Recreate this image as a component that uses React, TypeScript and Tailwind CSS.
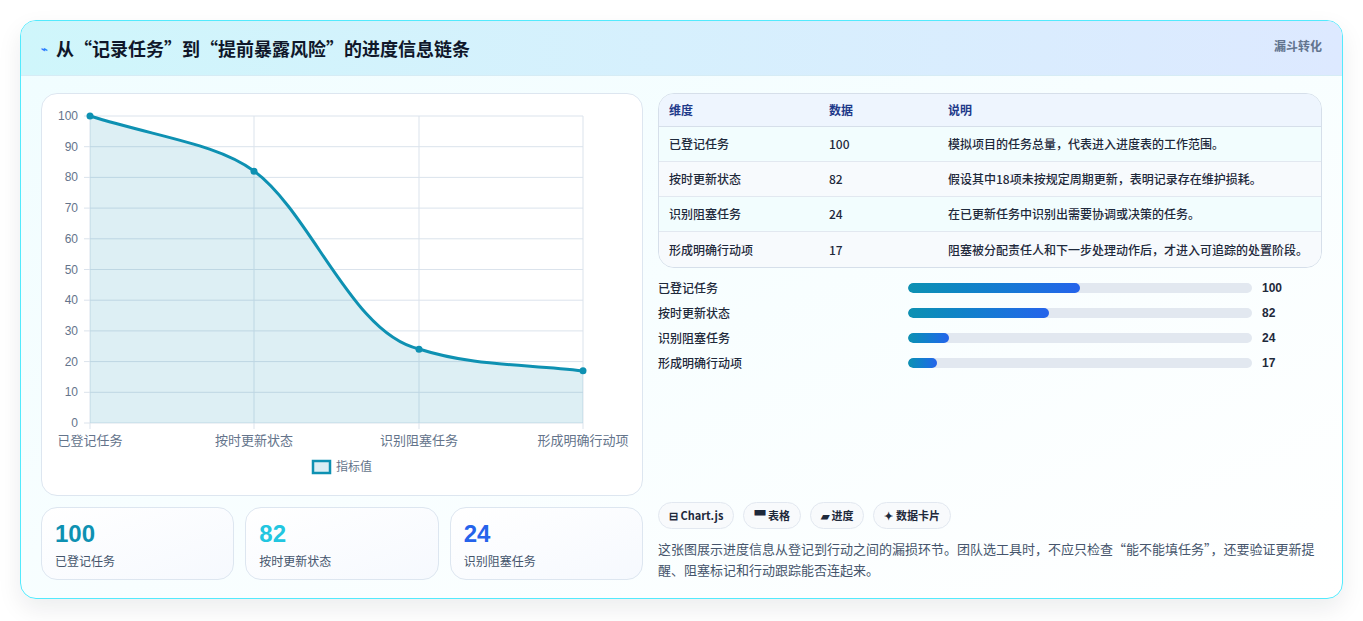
const font = { fontFamily: '"Noto Sans CJK SC", "Liberation Sans", sans-serif' };

const rows = [
  { name: "已登记任务", value: 100, note: "模拟项目的任务总量，代表进入进度表的工作范围。" },
  { name: "按时更新状态", value: 82, note: "假设其中18项未按规定周期更新，表明记录存在维护损耗。" },
  { name: "识别阻塞任务", value: 24, note: "在已更新任务中识别出需要协调或决策的任务。" },
  { name: "形成明确行动项", value: 17, note: "阻塞被分配责任人和下一步处理动作后，才进入可追踪的处置阶段。" },
];

const Chart = () => {
  const xs = [48, 212, 377, 541];
  const yOf = (v: number) => 329 - v * 3.07;
  const pts = rows.map((r, i) => [xs[i], yOf(r.value)]);
  const line = `M48,22 C120,44 175,50 212,77 C270,120 310,240 377,255 C430,272 480,270 541,277`;
  return (
    <svg width="600" height="401" viewBox="0 0 600 401" className="block">
      {[0, 10, 20, 30, 40, 50, 60, 70, 80, 90, 100].map((v) => (
        <g key={v}>
          <line x1={42} x2={541} y1={yOf(v)} y2={yOf(v)} stroke="#dbe3ec" strokeWidth={1} />
          <text x={36} y={yOf(v) + 4} textAnchor="end" fontSize="12" fill="#64748b" fontFamily="Liberation Sans, sans-serif">{v}</text>
        </g>
      ))}
      {xs.map((x) => (
        <line key={x} x1={x} x2={x} y1={22} y2={335} stroke="#dbe3ec" strokeWidth={1} />
      ))}
      <path d={`${line} L541,329 L48,329 Z`} fill="#0e91b2" fillOpacity={0.14} />
      <path d={line} fill="none" stroke="#0e91b2" strokeWidth={3} />
      {pts.map(([x, y], i) => (
        <circle key={i} cx={x} cy={y} r={3.5} fill="#0e91b2" />
      ))}
      {rows.map((r, i) => (
        <text key={r.name} x={xs[i]} y={351} textAnchor="middle" fontSize="13" fill="#64748b" style={font}>{r.name}</text>
      ))}
      <rect x={271} y={367} width={17} height={12} fill="#dbeef4" stroke="#0e91b2" strokeWidth={2.5} />
      <text x={294} y={377} fontSize="12" fill="#64748b" style={font}>指标值</text>
    </svg>
  );
};

export default function App() {
  return (
    <div className="min-h-screen bg-white p-5 pb-[22px]" style={font}>
      <div className="rounded-2xl border border-cyan-300 overflow-hidden shadow-[0_10px_25px_rgba(15,23,42,0.08)] bg-gradient-to-br from-[#f0fdff] to-white">
        <div className="h-[55px] flex items-center justify-between px-5 bg-gradient-to-r from-[#cff6fb] to-[#dde9ff] border-b border-[#d6ecf5]">
          <h1 className="text-[18px] font-bold text-[#0f172a] flex items-center gap-2">
            <span className="text-[11px] text-blue-500">⌁</span>从“记录任务”到“提前暴露风险”的进度信息链条
          </h1>
          <span className="self-start mt-4 text-[12px] font-semibold text-slate-500">漏斗转化</span>
        </div>
        <div className="flex gap-[15px] px-5 pt-[17px] pb-[18px]">
          <div className="w-[602px] flex flex-col gap-[11px]">
            <div className="h-[403px] rounded-2xl border border-[#dde6f0] bg-white">
              <Chart />
            </div>
            <div className="grid grid-cols-3 gap-[11px]">
              {[
                ["100", "已登记任务", "text-[#0e91b2]"],
                ["82", "按时更新状态", "text-[#22c6e0]"],
                ["24", "识别阻塞任务", "text-[#2563eb]"],
              ].map(([v, l, c]) => (
                <div key={l} className="h-[73px] rounded-2xl border border-[#dde6f0] bg-gradient-to-br from-white to-[#f6f9fe] px-[13px] pt-[12px]">
                  <div className={`text-[24px] leading-[28px] font-extrabold ${c}`} style={{ fontFamily: '"Liberation Sans", sans-serif' }}>{v}</div>
                  <div className="text-[12px] text-slate-600 mt-[4px]">{l}</div>
                </div>
              ))}
            </div>
          </div>
          <div className="flex-1 flex flex-col">
            <div className="rounded-2xl border border-[#d6dfea] overflow-hidden text-[12px] text-[#1e293b]">
              <div className="flex h-[33px] items-center bg-[#eef5fe] border-b border-[#d6dfea] font-semibold text-[#1e3a8a]">
                <div className="w-[160px] pl-[10px]">维度</div>
                <div className="w-[119px] pl-[10px]">数据</div>
                <div className="pl-[10px]">说明</div>
              </div>
              {rows.map((r, i) => (
                <div key={r.name} className={`flex h-[35px] items-center font-medium ${i % 2 ? "bg-[#f7fafd]" : "bg-[#f2fdfe]"} ${i < 3 ? "border-b border-[#e2e8f0]" : ""}`}>
                  <div className="w-[160px] pl-[10px]">{r.name}</div>
                  <div className="w-[119px] pl-[10px]">{r.value}</div>
                  <div className="pl-[10px]">{r.note}</div>
                </div>
              ))}
            </div>
            <div className="mt-[12px] flex flex-col gap-[10px]">
              {rows.map((r) => (
                <div key={r.name} className="flex items-center h-[15px] text-[12px] font-medium text-[#1e293b]">
                  <div className="w-[250px]">{r.name}</div>
                  <div className="w-[344px] h-[10px] rounded-full bg-[#e2e8f0] overflow-hidden">
                    <div className="h-full rounded-full bg-gradient-to-r from-[#0e91b2] to-[#2563eb]" style={{ width: `${r.value / 2}%` }} />
                  </div>
                  <div className="ml-[10px] font-bold" style={{ fontFamily: '"Liberation Sans", sans-serif' }}>{r.value}</div>
                </div>
              ))}
            </div>
            <div className="mt-auto">
              <div className="flex gap-[9px] text-[11px] font-semibold text-[#1e293b]">
                {["⊟ Chart.js", "▀ 表格", "▰ 进度", "✦ 数据卡片"].map((t) => (
                  <span key={t} className="h-[27px] px-[10px] flex items-center rounded-full border border-[#e2e8f0] bg-[#f8fafc]">{t}</span>
                ))}
              </div>
              <p className="mt-[9px] text-[13px] leading-[21px] text-slate-600">
                这张图展示进度信息从登记到行动之间的漏损环节。团队选工具时，不应只检查“能不能填任务”，还要验证更新提醒、阻塞标记和行动跟踪能否连起来。
              </p>
            </div>
          </div>
        </div>
      </div>
    </div>
  );
}
